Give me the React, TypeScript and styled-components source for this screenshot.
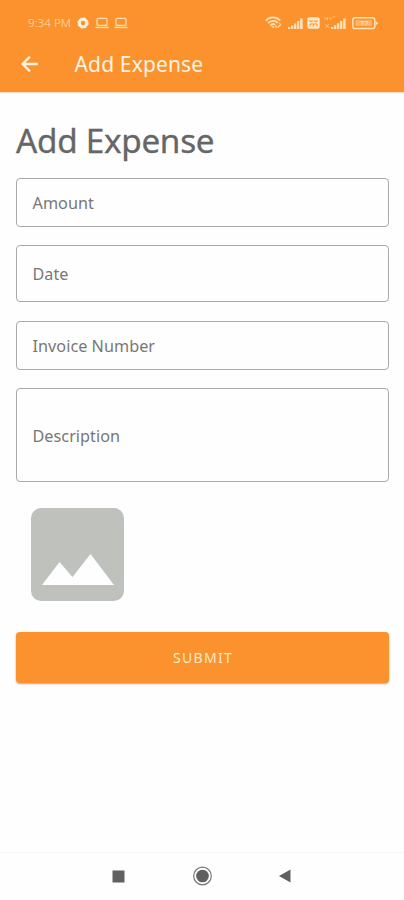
import React from "react";
import styled, { createGlobalStyle } from "styled-components";

const GlobalStyle = createGlobalStyle`
  * { box-sizing: border-box; }
  body { margin: 0; background: #fefefe; font-family: "Noto Sans", "Open Sans", sans-serif; }
`;

const Screen = styled.div`
  width: 404px;
  height: 900px;
  display: flex;
  flex-direction: column;
  background: #fefefe;
  overflow: hidden;
`;

const Header = styled.header`
  height: 92px;
  flex: none;
  background: #fb922d;
  box-shadow: 0 1px 1px #f9dfc6;
  display: flex;
  flex-direction: column;
`;

const StatusBar = styled.div`
  height: 36px;
  padding: 9px 24px 0 28px;
  display: flex;
  justify-content: space-between;
  color: #ffe0b5;
`;

const StatusGroup = styled.div`
  display: flex;
  align-items: center;
  height: 28px;
`;

const Clock = styled.span`
  width: 49px;
  font-size: 11.5px;
  font-weight: 300;
  letter-spacing: 0.1px;
  line-height: 28px;
  white-space: nowrap;
`;

const Toolbar = styled.div`
  height: 56px;
  display: flex;
  align-items: center;
  padding-left: 20px;
  color: #fff3e2;
`;

const BackButton = styled.button`
  width: 54px;
  height: 30px;
  padding: 0 0 1px;
  border: 0;
  background: none;
  color: inherit;
  display: flex;
  align-items: center;
`;

const ToolbarTitle = styled.span`
  font-size: 21px;
  line-height: 28px;
  letter-spacing: 0.15px;
  padding-left: 0.5px;
  white-space: nowrap;
`;

const Form = styled.main`
  flex: 1;
  padding: 24px 15px 0 16px;
  display: flex;
  flex-direction: column;
`;

const Heading = styled.h1`
  margin: 0 0 14px;
  height: 48px;
  font-size: 33.3px;
  font-weight: 400;
  line-height: 48px;
  color: #666;
  letter-spacing: -0.3px;
  -webkit-text-stroke: 0.3px #666;
  white-space: nowrap;
`;

const Field = styled.div<{ $height: number; $gap: number }>`
  height: ${(p) => p.$height}px;
  margin-bottom: ${(p) => p.$gap}px;
  padding: 2px 0 0 15.5px;
  border: 1px solid #aaa;
  border-radius: 4px;
  display: flex;
  align-items: center;
  font-size: 16.2px;
  letter-spacing: 0.04px;
  line-height: 23px;
  color: #777;
`;

const Thumbnail = styled.div`
  width: 93px;
  height: 93px;
  margin: 0 0 31px 15px;
  border-radius: 10px;
  background: #bfc1bc;
  flex: none;
`;

const SubmitButton = styled.button`
  height: 51px;
  border: 0;
  border-radius: 4px;
  padding: 0 0 0 1px;
  background: #fb922d;
  box-shadow: 0 1px 2px rgba(80, 60, 40, 0.45);
  color: #ffeacb;
  font: 400 14px "Noto Sans", sans-serif;
  letter-spacing: 1.3px;
`;

const NavBar = styled.nav`
  height: 48px;
  flex: none;
  border-top: 1px solid #f4f4f4;
  display: flex;
  justify-content: space-between;
  align-items: center;
  padding: 0 112px 1px;
`;

const SettingsDot = () => (
  <svg width="12" height="12" viewBox="0 0 12 12">
    <circle cx="6" cy="6" r="3.7" fill="none" stroke="#fff0dc" strokeWidth="3" />
    <circle cx="6" cy="6" r="5.2" fill="none" stroke="#fff0dc" strokeWidth="1" strokeDasharray="2 2.08" />
  </svg>
);

const LaptopIcon = () => (
  <svg width="14" height="12" viewBox="0 0 14 12" fill="none" stroke="currentColor" strokeWidth="1.2">
    <rect x="2" y="1.4" width="10" height="7" rx="1" />
    <path d="M0.5 10.4H13.5" strokeWidth="1.5" />
  </svg>
);

const WifiIcon = () => (
  <svg width="17" height="14" viewBox="0 0 17 14" fill="none" stroke="currentColor" strokeWidth="1.8">
    <path d="M0.8 4.6C4.5 0.4 11.5 0.4 15.2 4.6M3 7.2C6 4.2 10.5 4.2 13 7M5.2 9.5C7 7.8 8.8 7.8 10 8.8" />
    <path d="M6 10L8.2 12.6L9.8 10.4Z" fill="currentColor" stroke="none" />
    <path d="M11 9V12M14.5 7L15.5 9L12.5 11.5" strokeWidth="1.1" />
  </svg>
);

const SignalBars = () => (
  <svg width="15" height="11" viewBox="0 0 15 11" fill="currentColor">
    <path d="M0 9H2.3V11H0ZM3 7.5H5.3V11H3ZM6 5.5H8.3V11H6ZM9 3H11.3V11H9ZM12 0.5H14.7V11H12Z" />
  </svg>
);

const SimIcon = () => (
  <svg width="13" height="12" viewBox="0 0 13 12">
    <rect x="0.3" y="0.3" width="12.4" height="11.4" rx="2" fill="#ffe6c4" />
    <path d="M3 3V4.6H5.2V3M7.8 3V4.6H10V3M3 9.5V7H10V9.5M6.5 7V9.5" fill="none" stroke="#fb922d" strokeWidth="0.9" />
  </svg>
);

const NetworkIcon = () => (
  <svg width="23" height="15" viewBox="0 0 23 15" fill="currentColor">
    <path d="M1 1V3H3.5M3.5 1V4M5 1L6.5 3.8L8 1M9 1H11" fill="none" stroke="currentColor" strokeWidth="0.8" opacity="0.65" />
    <path d="M1.5 8L5 12M5 8L1.5 12" stroke="currentColor" strokeWidth="1" opacity="0.6" />
    <path d="M7 11H9.3V13H7ZM10 9.3H12.3V13H10ZM13 7.3H15.3V13H13ZM16 5H18.3V13H16ZM19 2.5H21.7V13H19Z" />
  </svg>
);

const BatteryIcon = () => (
  <svg width="27" height="13" viewBox="0 0 27 13">
    <rect x="0.8" y="0.8" width="22" height="10.8" rx="2.4" fill="none" stroke="#ffe3b6" strokeWidth="1.5" />
    <rect x="3.5" y="3.3" width="16.6" height="5.8" rx="0.8" fill="#fdb56d" />
    <path d="M8.5 4.5H11L9.8 7.8M12.5 4.5H15.5L14 7.8" fill="none" stroke="#ffe3b6" strokeWidth="0.8" />
    <path d="M23.8 4.2L26.4 6.2L23.8 8.2Z" fill="#ffe3b6" />
  </svg>
);

const IconSlot = styled.span<{ $width: number }>`
  width: ${(p) => p.$width}px;
  display: flex;
  flex: none;
`;

const fields = [
  { label: "Amount", height: 49, gap: 18 },
  { label: "Date", height: 57, gap: 19 },
  { label: "Invoice Number", height: 49, gap: 18 },
  { label: "Description", height: 94, gap: 26 },
];

export default function App() {
  return (
    <Screen>
      <GlobalStyle />
      <Header>
        <StatusBar>
          <StatusGroup>
            <Clock>9:34 PM</Clock>
            <IconSlot $width={18}><SettingsDot /></IconSlot>
            <IconSlot $width={19}><LaptopIcon /></IconSlot>
            <IconSlot $width={14}><LaptopIcon /></IconSlot>
          </StatusGroup>
          <StatusGroup>
            <IconSlot $width={23}><WifiIcon /></IconSlot>
            <IconSlot $width={19}><SignalBars /></IconSlot>
            <IconSlot $width={17}><SimIcon /></IconSlot>
            <IconSlot $width={28}><NetworkIcon /></IconSlot>
            <IconSlot $width={28}><BatteryIcon /></IconSlot>
          </StatusGroup>
        </StatusBar>
        <Toolbar>
          <BackButton aria-label="Back">
            <svg width="20" height="18" viewBox="0 0 20 18" fill="none" stroke="currentColor" strokeWidth="2.3">
              <path d="M17.8 9H3M10 1.6L2.6 9L10 16.4" />
            </svg>
          </BackButton>
          <ToolbarTitle>Add Expense</ToolbarTitle>
        </Toolbar>
      </Header>
      <Form>
        <Heading>Add Expense</Heading>
        {fields.map((field) => (
          <Field key={field.label} $height={field.height} $gap={field.gap}>{field.label}</Field>
        ))}
        <Thumbnail>
          <svg width="93" height="93" viewBox="0 0 93 93">
            <path d="M11 77L28.5 54L41.5 69L59.5 46L83 77Z" fill="#fefefe" />
          </svg>
        </Thumbnail>
        <SubmitButton>SUBMIT</SubmitButton>
      </Form>
      <NavBar>
        <svg width="13" height="13" viewBox="0 0 13 13"><rect x="0.5" y="0.5" width="12" height="12" fill="#606060" /></svg>
        <svg width="20" height="20" viewBox="0 0 20 20">
          <circle cx="10.5" cy="10" r="8.8" fill="none" stroke="#777" strokeWidth="1.2" />
          <circle cx="10.5" cy="10" r="6.3" fill="#606060" />
        </svg>
        <svg width="13" height="14" viewBox="0 0 13 14"><path d="M0 7L11.5 0.5V13.5Z" fill="#606060" /></svg>
      </NavBar>
    </Screen>
  );
}
